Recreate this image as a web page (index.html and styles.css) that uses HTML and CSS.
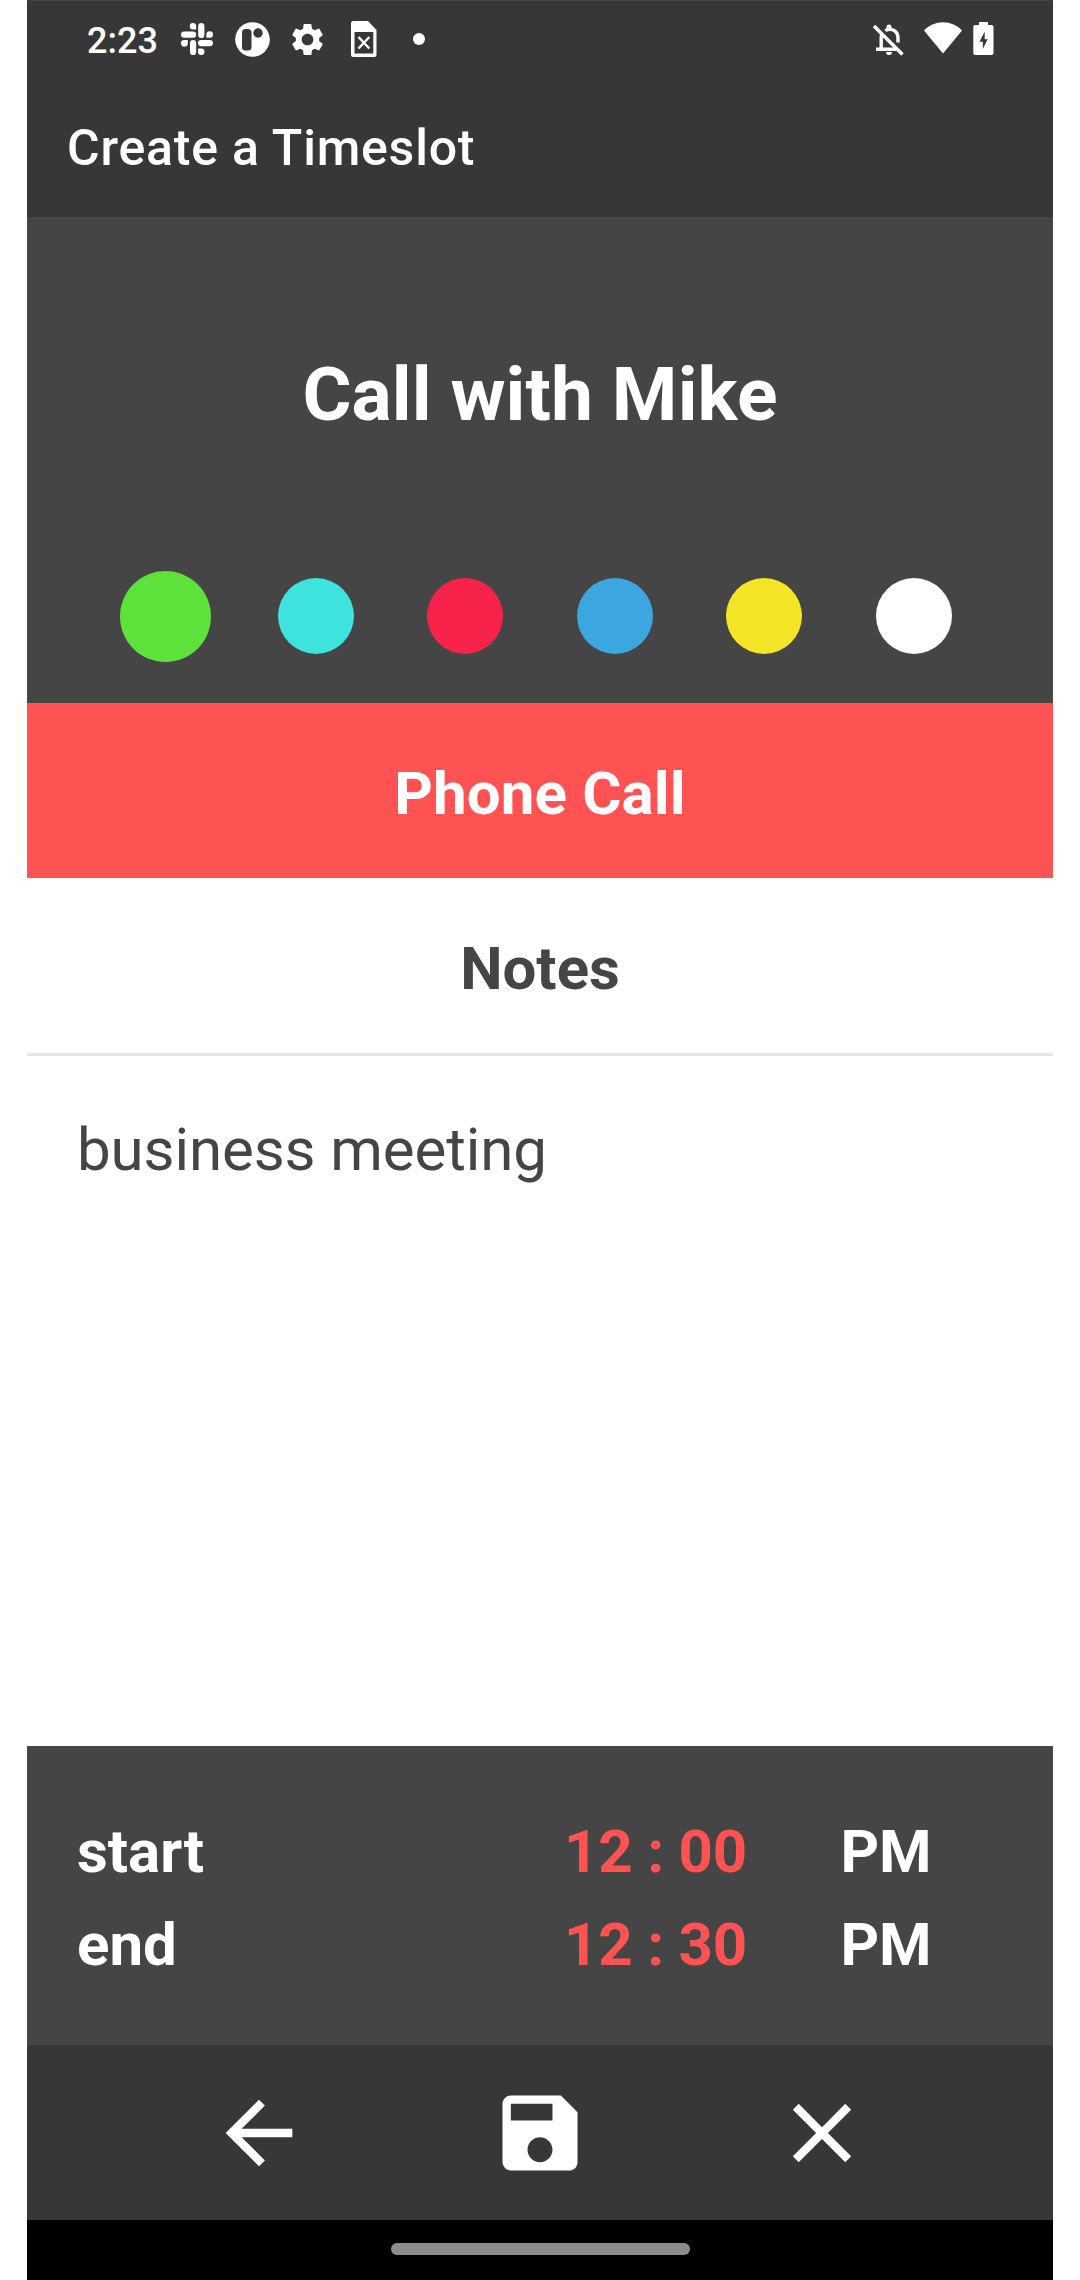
FILE: index.html
```html
<!DOCTYPE html>
<html lang="en">

<head>
    <meta charset="UTF-8">
    <meta name="viewport" content="width=device-width, initial-scale=1.0">
    <title>Create a Timeslot</title>
    <link rel="stylesheet" href="styles.css">
</head>

<body>
    <div class="phone">
        <header class="top-bar">
            <div class="status-bar">
                <span class="clock">2:23</span>
                <div class="status-left">
                    <svg class="icon-slack" width="32" height="32" viewBox="0 0 32 32" fill="#fff">
                        <path d="M12 0a3.2 3.2 0 0 1 3.2 3.2v3.2H12A3.2 3.2 0 0 1 12 0z" />
                        <rect x="0" y="8.4" width="15.2" height="6.4" rx="3.2" />
                        <rect x="17.2" y="0" width="6.2" height="15" rx="3.1" />
                        <path d="M32 11.6a3.2 3.2 0 0 1-3.2 3.2h-3.4v-3.2a3.3 3.3 0 0 1 6.6 0z" />
                        <rect x="17" y="17" width="15" height="6.2" rx="3.1" />
                        <path d="M20.2 32a3.2 3.2 0 0 1-3.2-3.2v-3.4h3.2a3.3 3.3 0 0 1 0 6.6z" />
                        <rect x="9" y="17" width="6.2" height="15" rx="3.1" />
                        <path d="M0 20.2a3.2 3.2 0 0 1 3.2-3.2h3.6v3.2a3.4 3.4 0 0 1-6.8 0z" />
                    </svg>
                    <svg class="icon-app" width="35" height="35" viewBox="0 0 35 35">
                        <circle cx="17.5" cy="17.5" r="17.3" fill="#fff" />
                        <rect x="7" y="7" width="9.5" height="21.5" rx="3.5" fill="#373737" />
                        <circle cx="23" cy="11" r="4.7" fill="#373737" />
                    </svg>
                    <svg class="icon-gear" width="39" height="39" viewBox="0 0 24 24" fill="#fff">
                        <path d="M19.14 12.94c.04-.3.06-.61.06-.94 0-.32-.02-.64-.07-.94l2.03-1.58c.18-.14.23-.41.12-.61l-1.92-3.32c-.12-.22-.37-.29-.59-.22l-2.39.96c-.5-.38-1.03-.7-1.62-.94l-.36-2.54c-.04-.24-.24-.41-.48-.41h-3.84c-.24 0-.43.17-.47.41l-.36 2.54c-.59.24-1.13.57-1.62.94l-2.39-.96c-.22-.08-.47 0-.59.22L2.74 8.87c-.12.21-.08.47.12.61l2.03 1.58c-.05.3-.09.63-.09.94s.02.64.07.94l-2.03 1.58c-.18.14-.23.41-.12.61l1.92 3.32c.12.22.37.29.59.22l2.39-.96c.5.38 1.03.7 1.62.94l.36 2.54c.05.24.24.41.48.41h3.84c.24 0 .44-.17.47-.41l.36-2.54c.59-.24 1.13-.56 1.62-.94l2.39.96c.22.08.47 0 .59-.22l1.92-3.32c.12-.22.07-.47-.12-.61l-2.01-1.58zM12 15.6c-1.98 0-3.6-1.62-3.6-3.6s1.62-3.6 3.6-3.6 3.6 1.62 3.6 3.6-1.62 3.6-3.6 3.6z" />
                    </svg>
                    <svg class="icon-file" width="26" height="36" viewBox="0 0 26 36">
                        <path fill="#fff" fill-rule="evenodd" d="M2.5 0H17l8.5 9v24.5a2.5 2.5 0 0 1-2.5 2.500H2.500A2.500 2.500 0 0 1 0 33.500v-31A2.500 2.500 0 0 1 2.500 0zM3.500 11v21.500h18.800V11z" />
                        <path stroke="#fff" stroke-width="2.4" d="M7.500 16l10.800 11.500M18.300 16L7.500 27.500" />
                    </svg>
                    <span class="more-dot"></span>
                </div>
                <div class="status-right">
                    <svg class="icon-bell" width="31" height="32" viewBox="0 0 31 32" fill="none" stroke="#fff">
                        <path stroke-width="3.400" d="M3 25.300h20M8.200 25V13.500q0-1.800.8-3.500M12.500 6.500c6-3 12.500.5 12.500 7.500v4.500" />
                        <path fill="#fff" stroke="none" d="M13.500 4.500V3a2.500 2.500 0 0 1 5 0v1.500l2.500 2h-10zM13 28h6a3 3 0 0 1-6 0z" />
                        <path stroke-width="3.400" d="M1 2l28.500 28.500" />
                    </svg>
                    <svg class="icon-wifi" width="38" height="32" viewBox="0 0 38 32" fill="#fff">
                        <path d="M19 31.500L0 8.500C5.500 3 12 .3 19 .3S32.500 3 38 8.500z" />
                    </svg>
                    <svg class="icon-battery" width="21" height="33" viewBox="0 0 21 33">
                        <path fill="#fff" d="M6 0h9v3h3.500A2 2 0 0 1 20.500 5v26a2 2 0 0 1-2 2H2.300a2 2 0 0 1-2-2V5a2 2 0 0 1 2-2H6z" />
                        <path fill="#373737" d="M11.700 9.500v7.800h3L9.800 27v-7.200H6.500z" />
                    </svg>
                </div>
            </div>
            <h1 class="screen-title">Create a Timeslot</h1>
        </header>

        <section class="event-header">
            <h2 class="event-name">Call with Mike</h2>
            <div class="colors">
                <div class="color-cell"><span class="color green selected"></span></div>
                <div class="color-cell"><span class="color teal"></span></div>
                <div class="color-cell"><span class="color red"></span></div>
                <div class="color-cell"><span class="color blue"></span></div>
                <div class="color-cell"><span class="color yellow"></span></div>
                <div class="color-cell"><span class="color white"></span></div>
            </div>
        </section>

        <div class="event-type">Phone Call</div>
        <div class="notes-title">Notes</div>
        <div class="notes-body">business meeting</div>

        <section class="times">
            <div class="time-row">
                <span class="time-label">start</span>
                <span class="time-value">12 : 00</span>
                <span class="time-period">PM</span>
            </div>
            <div class="time-row">
                <span class="time-label">end</span>
                <span class="time-value">12 : 30</span>
                <span class="time-period">PM</span>
            </div>
        </section>

        <nav class="actions">
            <svg width="100" height="100" viewBox="0 0 24 24" fill="#fff">
                <path d="M20 11H7.830l5.590-5.590L12 4l-8 8 8 8 1.410-1.410L7.830 13H20v-2z" />
            </svg>
            <svg width="100" height="100" viewBox="0 0 24 24" fill="#fff">
                <path d="M17 3H5a2 2 0 0 0-2 2v14a2 2 0 0 0 2 2h14c1.100 0 2-.9 2-2V7l-4-4zm-5 16c-1.660 0-3-1.340-3-3s1.340-3 3-3 3 1.340 3 3-1.340 3-3 3zm3-10H5V5h10v4z" />
            </svg>
            <svg width="100" height="100" viewBox="0 0 24 24" fill="#fff">
                <path d="M19 6.410L17.590 5 12 10.590 6.410 5 5 6.410 10.590 12 5 17.590 6.410 19 12 13.410 17.590 19 19 17.590 13.410 12z" />
            </svg>
        </nav>

        <div class="gesture-bar"><span class="gesture-pill"></span></div>
    </div>
</body>

</html>
```
FILE: styles.css
```css
* {
    margin: 0;
    padding: 0;
    box-sizing: border-box;
}

body {
    font-family: Roboto, sans-serif;
    background: #ffffff;
    color: #ffffff;
}

svg {
    display: block;
    flex-shrink: 0;
}

.phone {
    width: 1026px;
    height: 2280px;
    margin: 0 auto;
    display: flex;
    flex-direction: column;
}

/* Top bar */
.top-bar {
    height: 217px;
    background: #373737;
    border-top: 1px solid #454545;
}

.status-bar {
    height: 76px;
    padding: 0 59px 0 60px;
    display: flex;
    align-items: center;
}

.clock {
    width: 94px;
    font-size: 36px;
    font-weight: 500;
    line-height: 76px;
    padding-top: 4px;
}

.status-left,
.status-right {
    display: flex;
    align-items: center;
}

.icon-app {
    margin-left: 22px;
}

.icon-gear {
    margin-left: 18px;
}

.icon-file {
    margin-left: 24px;
}

.more-dot {
    width: 12px;
    height: 12px;
    margin-left: 36px;
    border-radius: 50%;
    background: #ffffff;
}

.status-right {
    margin-left: auto;
    align-items: flex-start;
}

.icon-bell {
    margin-top: 2px;
}

.icon-wifi {
    margin-left: 20px;
}

.icon-battery {
    margin-left: 11px;
}

.screen-title {
    padding: 41px 0 0 40px;
    font-size: 50px;
    line-height: 60px;
    font-weight: 500;
    letter-spacing: 0.8px;
}

/* Event name and colors */
.event-header {
    height: 485.5px;
    background: #454545;
}

.event-name {
    height: 353px;
    font-size: 75px;
    line-height: 354px;
    font-weight: 700;
    letter-spacing: 0.1px;
    text-align: center;
}

.colors {
    height: 92px;
    display: flex;
    justify-content: center;
}

.color-cell {
    width: 149.6px;
    display: flex;
    align-items: center;
    justify-content: center;
}

.color {
    width: 76px;
    height: 76px;
    border-radius: 50%;
}

.color.selected {
    width: 91px;
    height: 91px;
    margin-right: 1px;
}

.green {
    background: #5ce23a;
}

.teal {
    background: #3de3dc;
}

.red {
    background: #f7234b;
}

.blue {
    background: #3ca6e1;
}

.yellow {
    background: #f4e526;
}

.white {
    background: #ffffff;
}

/* Type and notes */
.event-type {
    height: 175px;
    background: #ff5353;
    font-size: 60px;
    line-height: 181px;
    font-weight: 700;
    letter-spacing: 0.15px;
    text-align: center;
}

.notes-title {
    height: 178.5px;
    border-bottom: 3px solid #e6e6e6;
    color: #454545;
    font-size: 60px;
    line-height: 182px;
    font-weight: 700;
    text-align: center;
}

.notes-body {
    flex: 1;
    padding: 59px 50px;
    color: #454545;
    font-size: 60px;
    line-height: 70px;
    letter-spacing: -0.1px;
}

/* Start and end time */
.times {
    height: 299px;
    padding: 60px 50px 0;
    background: #454545;
    font-size: 60px;
    font-weight: 700;
}

.time-row {
    height: 92.5px;
    line-height: 92px;
    display: flex;
}

.time-label {
    width: 450px;
}

.time-value {
    width: 235px;
    padding-left: 37px;
    color: #ff5353;
    letter-spacing: -0.2px;
    white-space: nowrap;
}

.time-period {
    width: 150px;
    margin-left: 49px;
    text-align: center;
}

/* Bottom actions */
.actions {
    height: 175px;
    background: #373737;
    display: flex;
    align-items: center;
    justify-content: space-evenly;
}

.gesture-bar {
    height: 60px;
    background: #000000;
    display: flex;
    align-items: center;
    justify-content: center;
}

.gesture-pill {
    width: 299px;
    height: 12px;
    margin-top: -2px;
    border-radius: 6px;
    background: #8c8c8c;
}
```
